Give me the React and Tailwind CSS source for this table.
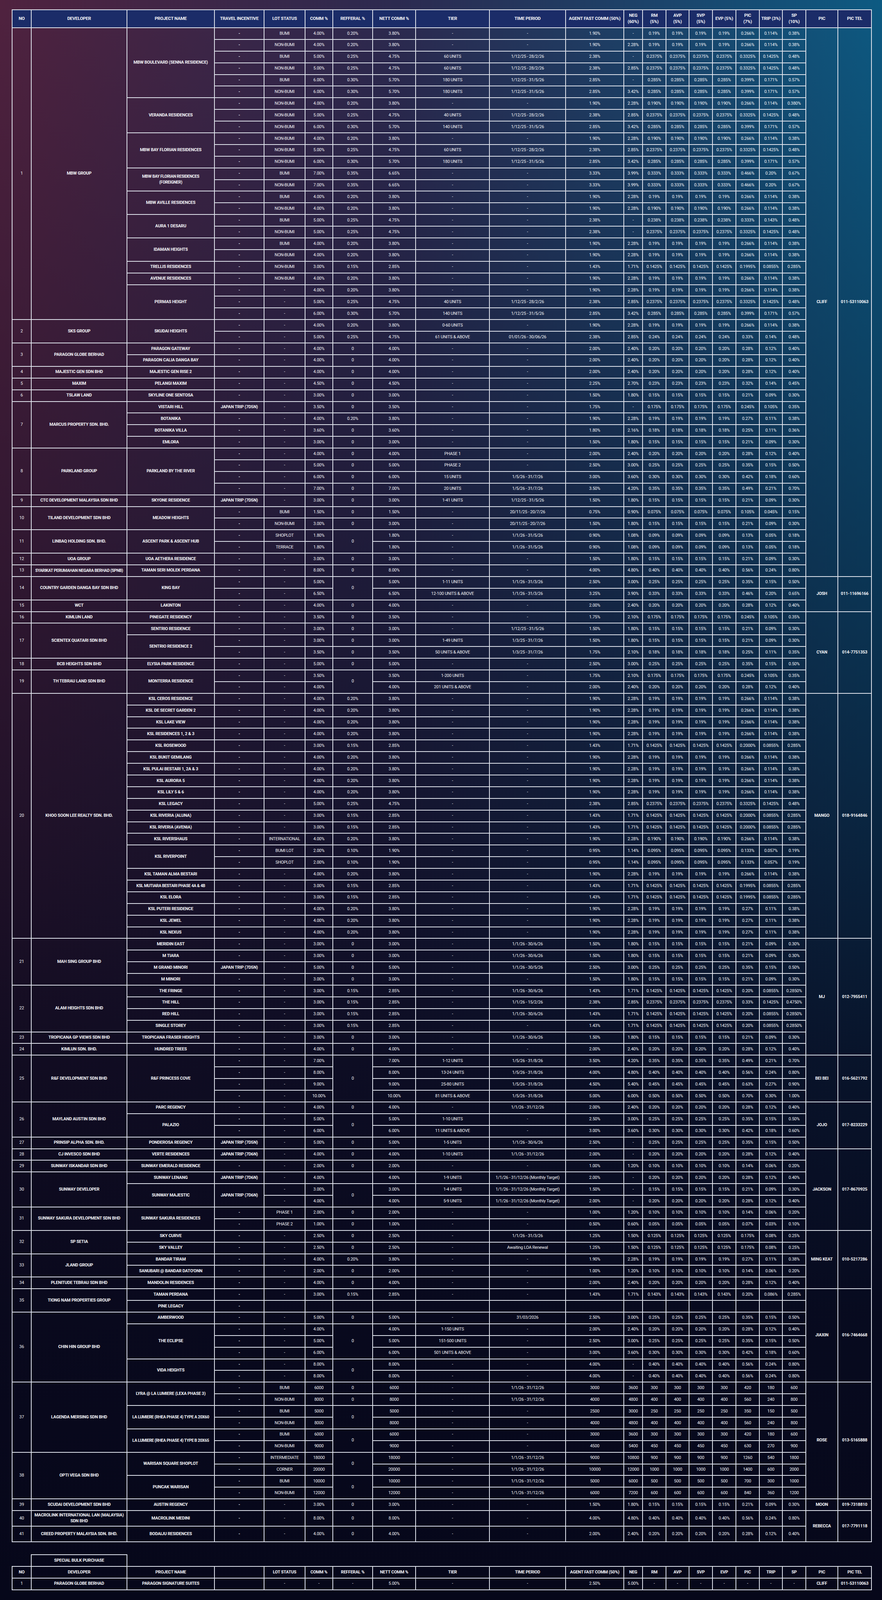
import React from 'react';

// column widths of the commission table, left to right
const COLS = [49, 245, 224, 127, 105, 71, 102, 110, 189, 195, 149, 48, 60, 59, 60, 60, 60, 59, 60, 82, 86];

const HEAD = [
  'NO', 'DEVELOPER', 'PROJECT NAME', 'TRAVEL INCENTIVE', 'LOT STATUS', 'COMM %', 'REFFERAL %', 'NETT COMM %',
  'TIER', 'TIME PERIOD', 'AGENT FAST COMM (50%)', 'NEG\n(60%)', 'RM\n(5%)', 'AVP\n(5%)', 'SVP\n(5%)', 'EVP (5%)',
  'PIC\n(7%)', 'TRIP (3%)', 'SP\n(10%)', 'PIC', 'PIC TEL',
];

// row: travel|lot|comm|ref|nett|tier|time|agent|neg|rm(=avp=svp=evp)|pic|trip|sp
// "x~2" spans rows, "^" is covered by the span above
const K19 = '-|-|4.00%|0.20%|3.80%|-|-|1.90%|2.28%|0.19%|0.266%|0.114%|0.38%';
const K14 = '-|-|3.00%|0.15%|2.85%|-|-|1.43%|1.71%|0.1425%|0.2000%|0.0855%|0.285%';
const K14b = '-|-|3.00%|0.15%|2.85%|-|-|1.43%|1.71%|0.1425%|0.1995%|0.0855%|0.285%';
const K19b = '-|-|4.00%|0.20%|3.80%|-|-|1.90%|2.28%|0.19%|0.27%|0.11%|0.38%';
const P20 = '-|-|4.00%|0|4.00%|-|-|2.00%|2.40%|0.20%|0.28%|0.12%|0.40%';
const P15 = '-|-|3.00%|0|3.00%|-|-|1.50%|1.80%|0.15%|0.21%|0.09%|0.30%';

const DATA = [
  ['1', 'MBW GROUP', [
    ['MBW BOULEVARD (SENNA RESIDENCE)', [
      '-|BUMI|4.00%|0.20%|3.80%|-|-|1.90%|-|0.19%|0.266%|0.114%|0.38%',
      '-|NON-BUMI|4.00%|0.20%|3.80%|-|-|1.90%|2.28%|0.19%|0.266%|0.114%|0.38%',
      '-|BUMI|5.00%|0.25%|4.75%|60 UNITS|1/12/25 - 28/2/26|2.38%|-|0.2375%|0.3325%|0.1425%|0.48%',
      '-|NON-BUMI|5.00%|0.25%|4.75%|60 UNITS|1/12/25 - 28/2/26|2.38%|2.85%|0.2375%|0.3325%|0.1425%|0.48%',
      '-|BUMI|6.00%|0.30%|5.70%|180 UNITS|1/12/25 - 31/5/26|2.85%|-|0.285%|0.399%|0.171%|0.57%',
      '-|NON-BUMI|6.00%|0.30%|5.70%|180 UNITS|1/12/25 - 31/5/26|2.85%|3.42%|0.285%|0.399%|0.171%|0.57%',
    ]],
    ['VERANDA RESIDENCES', [
      '-|NON-BUMI|4.00%|0.20%|3.80%|-|-|1.90%|2.28%|0.190%|0.266%|0.114%|0.380%',
      '-|NON-BUMI|5.00%|0.25%|4.75%|40 UNITS|1/12/25 - 28/2/26|2.38%|2.85%|0.2375%|0.3325%|0.1425%|0.48%',
      '-|NON-BUMI|6.00%|0.30%|5.70%|140 UNITS|1/12/25 - 31/5/26|2.85%|3.42%|0.285%|0.399%|0.171%|0.57%',
    ]],
    ['MBW BAY FLORIAN RESIDENCES', [
      '-|NON-BUMI|4.00%|0.20%|3.80%|-|-|1.90%|2.28%|0.190%|0.266%|0.114%|0.38%',
      '-|NON-BUMI|5.00%|0.25%|4.75%|60 UNITS|1/12/25 - 28/2/26|2.38%|2.85%|0.2375%|0.3325%|0.1425%|0.48%',
      '-|NON-BUMI|6.00%|0.30%|5.70%|180 UNITS|1/12/25 - 31/5/26|2.85%|3.42%|0.285%|0.399%|0.171%|0.57%',
    ]],
    ['MBW BAY FLORIAN RESIDENCES\n(FOREIGNER)', [
      '-|BUMI|7.00%|0.35%|6.65%|-|-|3.33%|3.99%|0.333%|0.466%|0.20%|0.67%',
      '-|NON-BUMI|7.00%|0.35%|6.65%|-|-|3.33%|3.99%|0.333%|0.466%|0.20%|0.67%',
    ]],
    ['MBW AVILLE RESIDENCES', [
      '-|BUMI|4.00%|0.20%|3.80%|-|-|1.90%|2.28%|0.19%|0.266%|0.114%|0.38%',
      '-|NON-BUMI|4.00%|0.20%|3.80%|-|-|1.90%|2.28%|0.190%|0.266%|0.114%|0.38%',
    ]],
    ['AURA 1 DESARU', [
      '-|BUMI|5.00%|0.25%|4.75%|-|-|2.38%|-|0.238%|0.333%|0.143%|0.48%',
      '-|NON-BUMI|5.00%|0.25%|4.75%|-|-|2.38%|-|0.2375%|0.3325%|0.1425%|0.48%',
    ]],
    ['IDAMAN HEIGHTS', [
      '-|BUMI|4.00%|0.20%|3.80%|-|-|1.90%|2.28%|0.19%|0.266%|0.114%|0.38%',
      '-|NON-BUMI|4.00%|0.20%|3.80%|-|-|1.90%|2.28%|0.19%|0.266%|0.114%|0.38%',
    ]],
    ['TRELLIS RESIDENCES', ['-|NON-BUMI|3.00%|0.15%|2.85%|-|-|1.43%|1.71%|0.1425%|0.1995%|0.0855%|0.285%']],
    ['AVENUE RESIDENCES', ['-|NON-BUMI|4.00%|0.20%|3.80%|-|-|1.90%|2.28%|0.19%|0.266%|0.114%|0.38%']],
    ['PERMAS HEIGHT', [
      K19,
      '-|-|5.00%|0.25%|4.75%|40 UNITS|1/12/25 - 28/2/26|2.38%|2.85%|0.2375%|0.3325%|0.1425%|0.48%',
      '-|-|6.00%|0.30%|5.70%|140 UNITS|1/12/25 - 31/5/26|2.85%|3.42%|0.285%|0.399%|0.171%|0.57%',
    ]],
  ]],
  ['2', 'SKS GROUP', [
    ['SKUDAI HEIGHTS', [
      '-|-|4.00%|0.20%|3.80%|0-60 UNITS|-|1.90%|2.28%|0.19%|0.266%|0.114%|0.38%',
      '-|-|5.00%|0.25%|4.75%|61 UNITS & ABOVE|01/01/26 - 30/06/26|2.38%|2.85%|0.24%|0.33%|0.14%|0.48%',
    ]],
  ]],
  ['3', 'PARAGON GLOBE BERHAD', [['PARAGON GATEWAY', [P20]], ['PARAGON CALIA DANGA BAY', [P20]]]],
  ['4', 'MAJESTIC GEN SDN BHD', [['MAJESTIC GEN RISE 2', [P20]]]],
  ['5', 'MAXIM', [['PELANGI MAXIM', ['-|-|4.50%|0|4.50%|-|-|2.25%|2.70%|0.23%|0.32%|0.14%|0.45%']]]],
  ['6', 'TSLAW LAND', [['SKYLINE ONE SENTOSA', [P15]]]],
  ['7', 'MARCUS PROPERTY SDN. BHD.', [
    ['VISTARI HILL', ['JAPAN TRIP (7D5N)|-|3.50%|0|3.50%|-|-|1.75%|-|0.175%|0.245%|0.105%|0.35%']],
    ['BOTANIKA', [K19b]],
    ['BOTANIKA VILLA', ['-|-|3.60%|0|3.60%|-|-|1.80%|2.16%|0.18%|0.25%|0.11%|0.36%']],
    ['EMLORA', [P15]],
  ]],
  ['8', 'PARKLAND GROUP', [
    ['PARKLAND BY THE RIVER', [
      '-|-|4.00%|0|4.00%|PHASE 1|-|2.00%|2.40%|0.20%|0.28%|0.12%|0.40%',
      '-|-|5.00%|0|5.00%|PHASE 2|-|2.50%|3.00%|0.25%|0.35%|0.15%|0.50%',
      '-|-|6.00%|0|6.00%|15 UNITS|1/5/26 - 31/7/26|3.00%|3.60%|0.30%|0.42%|0.18%|0.60%',
      '-|-|7.00%|0|7.00%|20 UNITS|1/5/26 - 31/7/26|3.50%|4.20%|0.35%|0.49%|0.21%|0.70%',
    ]],
  ]],
  ['9', 'CTC DEVELOPMENT MALAYSIA SDN BHD', [
    ['SKYONE RESIDENCE', ['JAPAN TRIP (7D5N)|-|3.00%|0|3.00%|1-41 UNITS|1/12/25 - 31/5/26|1.50%|1.80%|0.15%|0.21%|0.09%|0.30%']],
  ]],
  ['10', 'TILAND DEVELOPMENT SDN BHD', [
    ['MEADOW HEIGHTS', [
      '-|BUMI|1.50%|0|1.50%|-|20/11/25 - 20/7/26|0.75%|0.90%|0.075%|0.105%|0.045%|0.15%',
      '-|NON-BUMI|3.00%|0|3.00%|-|20/11/25 - 20/7/26|1.50%|1.80%|0.15%|0.21%|0.09%|0.30%',
    ]],
  ]],
  ['11', 'LINBAQ HOLDING SDN. BHD.', [
    ['ASCENT PARK & ASCENT HUB', [
      '-|SHOPLOT|1.80%|0~2|1.80%|-|1/1/26 - 31/5/26|0.90%|1.08%|0.09%|0.13%|0.05%|0.18%',
      '-|TERRACE|1.80%|^|1.80%|-|1/1/26 - 31/5/26|0.90%|1.08%|0.09%|0.13%|0.05%|0.18%',
    ]],
  ]],
  ['12', 'UOA GROUP', [['UOA AETHERA RESIDENCE', [P15]]]],
  ['13', 'SYARIKAT PERUMAHAN NEGARA BERHAD (SPNB)', [
    ['TAMAN SERI MOLEK PERDANA', ['-|-|8.00%|0|8.00%|-|-|4.00%|4.80%|0.40%|0.56%|0.24%|0.80%']],
  ]],
  ['14', 'COUNTRY GARDEN DANGA BAY SDN BHD', [
    ['KING BAY', [
      '-|-|5.00%|0~2|5.00%|1-11 UNITS|1/1/26 - 31/3/26|2.50%|3.00%|0.25%|0.35%|0.15%|0.50%',
      '-|-|6.50%|^|6.50%|12-100 UNITS & ABOVE|1/1/26 - 31/3/26|3.25%|3.90%|0.33%|0.46%|0.20%|0.65%',
    ]],
  ]],
  ['15', 'WCT', [['LAKINTON', [P20]]]],
  ['16', 'KIMLUN LAND', [['PINEGATE RESIDENCY', ['-|-|3.50%|0|3.50%|-|-|1.75%|2.10%|0.175%|0.245%|0.105%|0.35%']]]],
  ['17', 'SCIENTEX QUATARI SDN BHD', [
    ['SENTRIO RESIDENCE', ['-|-|3.00%|0|3.00%|-|1/12/25 - 31/5/26|1.50%|1.80%|0.15%|0.21%|0.09%|0.30%']],
    ['SENTRIO RESIDENCE 2', [
      '-|-|3.00%|0|3.00%|1-49 UNITS|1/3/25 - 31/7/26|1.50%|1.80%|0.15%|0.21%|0.09%|0.30%',
      '-|-|3.50%|0|3.50%|50 UNITS & ABOVE|1/3/25 - 31/7/26|1.75%|2.10%|0.18%|0.25%|0.11%|0.35%',
    ]],
  ]],
  ['18', 'BCB HEIGHTS SDN BHD', [['ELYSIA PARK RESIDENCE', ['-|-|5.00%|0|5.00%|-|-|2.50%|3.00%|0.25%|0.35%|0.15%|0.50%']]]],
  ['19', 'TH TEBRAU LAND SDN BHD', [
    ['MONTERRA RESIDENCE', [
      '-|-|3.50%|0~2|3.50%|1-200 UNITS|-|1.75%|2.10%|0.175%|0.245%|0.105%|0.35%',
      '-|-|4.00%|^|4.00%|201 UNITS & ABOVE|-|2.00%|2.40%|0.20%|0.28%|0.12%|0.40%',
    ]],
  ]],
  ['20', 'KHOO SOON LEE REALTY SDN. BHD.', [
    ['KSL CEROS RESIDENCE', [K19]],
    ['KSL DE SECRET GARDEN 2', [K19]],
    ['KSL LAKE VIEW', [K19]],
    ['KSL RESIDENCES 1, 2 & 3', [K19]],
    ['KSL ROSEWOOD', [K14]],
    ['KSL BUKIT GEMILANG', [K19]],
    ['KSL PULAI BESTARI 1, 2A & 3', [K19]],
    ['KSL AURORA 5', [K19]],
    ['KSL LILY 5 & 6', [K19]],
    ['KSL LEGACY', ['-|-|5.00%|0.25%|4.75%|-|-|2.38%|2.85%|0.2375%|0.3325%|0.1425%|0.48%']],
    ['KSL RIVERIA (ALUNA)', [K14]],
    ['KSL RIVERIA (AVENIA)', [K14]],
    ['KSL RIVERSHAUS', ['-|INTERNATIONAL|4.00%|0.20%|3.80%|-|-|1.90%|2.28%|0.190%|0.266%|0.114%|0.38%']],
    ['KSL RIVERPOINT', [
      '-|BUMI LOT|2.00%|0.10%|1.90%|-|-|0.95%|1.14%|0.095%|0.133%|0.057%|0.19%',
      '-|SHOPLOT|2.00%|0.10%|1.90%|-|-|0.95%|1.14%|0.095%|0.133%|0.057%|0.19%',
    ]],
    ['KSL TAMAN ALMA BESTARI', [K19]],
    ['KSL MUTIARA BESTARI PHASE 4A & 4B', [K14b]],
    ['KSL ELORA', [K14b]],
    ['KSL PUTERI RESIDENCE', [K19b]],
    ['KSL JEWEL', [K19b]],
    ['KSL NEXUS', [K19b]],
  ]],
  ['21', 'MAH SING GROUP BHD', [
    ['MERIDIN EAST', ['-|-|3.00%|0|3.00%|-|1/1/26 - 30/6/26|1.50%|1.80%|0.15%|0.21%|0.09%|0.30%']],
    ['M TIARA', ['-|-|3.00%|0|3.00%|-|1/1/26 - 30/6/26|1.50%|1.80%|0.15%|0.21%|0.09%|0.30%']],
    ['M GRAND MINORI', ['JAPAN TRIP (7D5N)|-|5.00%|0|5.00%|-|1/1/26 - 30/5/26|2.50%|3.00%|0.25%|0.35%|0.15%|0.50%']],
    ['M MINORI', [P15]],
  ]],
  ['22', 'ALAM HEIGHTS SDN BHD', [
    ['THE FRINGE', ['-|-|3.00%|0.15%|2.85%|-|1/1/26 - 30/6/26|1.43%|1.71%|0.1425%|0.20%|0.0855%|0.2850%']],
    ['THE HILL', ['-|-|3.00%|0.15%|2.85%|-|1/1/26 - 15/2/26|2.38%|2.85%|0.2375%|0.33%|0.1425%|0.4750%']],
    ['RED HILL', ['-|-|3.00%|0.15%|2.85%|-|1/1/26 - 30/6/26|1.43%|1.71%|0.1425%|0.20%|0.0855%|0.2850%']],
    ['SINGLE STOREY', ['-|-|3.00%|0.15%|2.85%|-|-|1.43%|1.71%|0.1425%|0.20%|0.0855%|0.2850%']],
  ]],
  ['23', 'TROPICANA GP VIEWS SDN BHD', [
    ['TROPICANA FRASER HEIGHTS', ['-|-|3.00%|0|3.00%|-|1/1/26 - 30/6/26|1.50%|1.80%|0.15%|0.21%|0.09%|0.30%']],
  ]],
  ['24', 'KIMLUN SDN. BHD.', [['HUNDRED TREES', [P20]]]],
  ['25', 'R&F DEVELOPMENT SDN BHD', [
    ['R&F PRINCESS COVE', [
      '-|-|7.00%|0~4|7.00%|1-12 UNITS|1/5/26 - 31/8/26|3.50%|4.20%|0.35%|0.49%|0.21%|0.70%',
      '-|-|8.00%|^|8.00%|13-24 UNITS|1/5/26 - 31/8/26|4.00%|4.80%|0.40%|0.56%|0.24%|0.80%',
      '-|-|9.00%|^|9.00%|25-80 UNITS|1/5/26 - 31/8/26|4.50%|5.40%|0.45%|0.63%|0.27%|0.90%',
      '-|-|10.00%|^|10.00%|81 UNITS & ABOVE|1/5/26 - 31/8/26|5.00%|6.00%|0.50%|0.70%|0.30%|1.00%',
    ]],
  ]],
  ['26', 'MAYLAND AUSTIN SDN BHD', [
    ['PARC REGENCY', ['-|-|4.00%|0|4.00%|-|1/1/26 - 31/12/26|2.00%|2.40%|0.20%|0.28%|0.12%|0.40%']],
    ['PALAZIO', [
      '-|-|5.00%|0~2|5.00%|1-10 UNITS|-|2.50%|3.00%|0.25%|0.35%|0.15%|0.50%',
      '-|-|6.00%|^|6.00%|11 UNITS & ABOVE|-|3.00%|3.60%|0.30%|0.42%|0.18%|0.60%',
    ]],
  ]],
  ['27', 'PRINSIP ALPHA SDN. BHD.', [
    ['PONDEROSA REGENCY', ['JAPAN TRIP (7D5N)|-|5.00%|0|5.00%|1-5 UNITS|1/1/26 - 30/6/26|2.50%|-|0.25%|0.35%|0.15%|0.50%']],
  ]],
  ['28', 'CJ INVESCO SDN BHD', [
    ['VERTE RESIDENCES', ['JAPAN TRIP (7D6N)|-|4.00%|0|4.00%|1-10 UNITS|1/1/26 - 31/12/26|2.00%|-|0.20%|0.28%|0.12%|0.40%']],
  ]],
  ['29', 'SUNWAY ISKANDAR SDN BHD', [
    ['SUNWAY EMERALD RESIDENCE', ['-|-|2.00%|0|2.00%|-|-|1.00%|1.20%|0.10%|0.14%|0.06%|0.20%']],
  ]],
  ['30', 'SUNWAY DEVELOPER', [
    ['SUNWAY LENANG', ['JAPAN TRIP (7D6N)|-|4.00%||4.00%|1-9 UNITS|1/1/26 - 31/12/26 (Monthly Target)|2.00%|-|0.20%|0.28%|0.12%|0.40%']],
    ['SUNWAY MAJESTIC', [
      'JAPAN TRIP (7D6N)~2|-|3.00%|0~2|3.00%|1-4 UNITS|1/1/26 - 31/12/26 (Monthly Target)|1.50%|-|0.15%|0.21%|0.09%|0.30%',
      '^|-|4.00%|^|4.00%|5-9 UNITS|1/1/26 - 31/12/26 (Monthly Target)|2.00%|-|0.20%|0.28%|0.12%|0.40%',
    ]],
  ]],
  ['31', 'SUNWAY SAKURA DEVELOPMENT SDN BHD', [
    ['SUNWAY SAKURA RESIDENCES', [
      '-|PHASE 1|2.00%|0|2.00%|-|-|1.00%|1.20%|0.10%|0.14%|0.06%|0.20%',
      '-|PHASE 2|1.00%|0|1.00%|-|-|0.50%|0.60%|0.05%|0.07%|0.03%|0.10%',
    ]],
  ]],
  ['32', 'SP SETIA', [
    ['SKY CURVE', ['-|-|2.50%|0|2.50%|-|1/1/26 - 31/3/26|1.25%|1.50%|0.125%|0.175%|0.08%|0.25%']],
    ['SKY VALLEY', ['-|-|2.50%|0|2.50%|-|Awaiting LOA Renewal|1.25%|1.50%|0.125%|0.175%|0.08%|0.25%']],
  ]],
  ['33', 'JLAND GROUP', [
    ['BANDAR TIRAM', [K19b]],
    ["SANUBARI @ BANDAR DATO'ONN", ['-|-|2.00%|0|2.00%|-|-|1.00%|1.20%|0.10%|0.14%|0.06%|0.20%']],
  ]],
  ['34', 'PLENITUDE TEBRAU SDN BHD', [['MANDOLIN RESIDENCES', [P20]]]],
  ['35', 'TIONG NAM PROPERTIES GROUP', [
    ['TAMAN PERDANA', ['-|-|3.00%|0.15%|2.85%|-|-|1.43%|1.71%|0.143%|0.20%|0.086%|0.285%']],
    ['PINE LEGACY', ['-||||||||||||']],
  ]],
  ['36', 'CHIN HIN GROUP BHD', [
    ['AMBERWOOD', ['-|-|5.00%|0|5.00%|-|31/03/2026|2.50%|3.00%|0.25%|0.35%|0.15%|0.50%']],
    ['THE ECLIPSE', [
      '-|-|4.00%|0~3|4.00%|1-150 UNITS|-|2.00%|2.40%|0.20%|0.28%|0.12%|0.40%',
      '-|-|5.00%|^|5.00%|151-500 UNITS|-|2.50%|3.00%|0.25%|0.35%|0.15%|0.50%',
      '-|-|6.00%|^|6.00%|501 UNITS & ABOVE|-|3.00%|3.60%|0.30%|0.42%|0.18%|0.60%',
    ]],
    ['VIDA HEIGHTS', [
      '-|-|8.00%|0~2|8.00%|-|-|4.00%|-|0.40%|0.56%|0.24%|0.80%',
      '-|-|8.00%|^|8.00%|-|-|4.00%|-|0.40%|0.56%|0.24%|0.80%',
    ]],
  ]],
  ['37', 'LAGENDA MERSING SDN BHD', [
    ['LYRA @ LA LUMIERE (LEXA PHASE 3)', [
      '-|BUMI|6000|0|6000|-|1/1/26 - 31/12/26|3000|3600|300|420|180|600',
      '-|NON-BUMI|8000|0|8000|-|1/1/26 - 31/12/26|4000|4800|400|560|240|800',
    ]],
    ['LA LUMIERE (RHEA PHASE 4) TYPE A 20X60', [
      '-|BUMI|5000|0~2|5000|-|-|2500|3000|250|350|150|500',
      '-|NON-BUMI|8000|^|8000|-|-|4000|4800|400|560|240|800',
    ]],
    ['LA LUMIERE (RHEA PHASE 4) TYPE B 20X65', [
      '-|BUMI|6000|0~2|6000|-|-|3000|3600|300|420|180|600',
      '-|NON-BUMI|9000|^|9000|-|-|4500|5400|450|630|270|900',
    ]],
  ]],
  ['38', 'OPTI VEGA SDN BHD', [
    ['WARISAN SQUARE SHOPLOT', [
      '-|INTERMEDIATE|18000|0~2|18000|-|1/1/26 - 31/12/26|9000|10800|900|1260|540|1800',
      '-|CORNER|20000|^|20000|-|1/1/26 - 31/12/26|10000|12000|1000|1400|600|2000',
    ]],
    ['PUNCAK WARISAN', [
      '-|BUMI|10000|0~2|10000|-|1/1/26 - 31/12/26|5000|6000|500|700|300|1000',
      '-|NON-BUMI|12000|^|12000|-|1/1/26 - 31/12/26|6000|7200|600|840|360|1200',
    ]],
  ]],
  ['39', 'SCUDAI DEVELOPMENT SDN BHD', [['AUSTIN REGENCY', [P15]]]],
  ['40', 'MACROLINK INTERNATIONAL LAN (MALAYSIA)\nSDN BHD', [
    ['MACROLINK MEDINI', ['-|-|8.00%|0|8.00%|-|-|4.00%|4.80%|0.40%|0.56%|0.24%|0.80%']],
  ], true],
  ['41', 'CREED PROPERTY MALAYSIA SDN. BHD.', [['BODAIJU RESIDENCES', [P20]]], true],
];

const PICS = [
  ['CLIFF', '011-53110063', 47],
  ['JOSH', '011-11696166', 3],
  ['CYAN', '014-7751353', 7],
  ['MANGO', '018-9164846', 21],
  ['MJ', '012-7955411', 10],
  ['BEI BEI', '016-5621792', 4],
  ['JOJO', '017-8233229', 4],
  ['JACKSON', '017-8670925', 7],
  ['MING KEAT', '010-5217286', 5],
  ['JIAXIN', '016-7464668', 8],
  ['ROSE', '013-5165888', 10],
  ['MOON', '019-7318810', 1],
  ['REBECCA', '017-7791118', 2],
];

const SPECIAL_HEAD = [
  'NO', 'DEVELOPER', 'PROJECT NAME', '', 'LOT STATUS', 'COMM %', 'REFFERAL %', 'NETT COMM %', 'TIER', 'TIME PERIOD',
  'AGENT FAST COMM (50%)', 'NEG', 'RM', 'AVP', 'SVP', 'EVP', 'PIC', 'TRIP', 'SP', 'PIC', 'PIC TEL',
];
const SPECIAL_ROW = [
  '1', 'PARAGON GLOBE BERHAD', 'PARAGON SIGNATURE SUITES', '', '-', '-', '-', '5.00%', '-', '-',
  '2.50%', '5.00%', '-', '-', '-', '-', '-', '-', '-', 'CLIFF', '011-53110063',
];

// flatten groups into table rows
const ROWS = [];
DATA.forEach(([no, dev, projects, tall]) => {
  const devSpan = projects.reduce((n, p) => n + p[1].length, 0);
  projects.forEach(([name, list], pi) => {
    list.forEach((line, li) => {
      ROWS.push({
        no, dev, name, tall,
        devSpan: pi === 0 && li === 0 ? devSpan : 0,
        projSpan: li === 0 ? list.length : 0,
        cells: line.split('|'),
      });
    });
  });
});
let start = 0;
PICS.forEach(([pic, tel, span]) => {
  ROWS[start].pic = { pic, tel, span };
  start += span;
});

const td = 'border-2 border-[#dfe3ec] text-center align-middle px-0.5 leading-[1.35] whitespace-pre';

const Cell = ({ raw, bold }) => {
  if (raw === '^') return null;
  const [v, span] = raw.split('~');
  return (
    <td rowSpan={span ? Number(span) : undefined} className={`${td} ${bold ? 'font-bold' : 'font-normal'}`}>
      {v}
    </td>
  );
};

const ColGroup = () => (
  <colgroup>
    {COLS.map((w, i) => (
      <col key={i} style={{ width: w }} />
    ))}
  </colgroup>
);

export default function App() {
  return (
    <div className="min-h-screen w-full bg-[image:linear-gradient(to_bottom,rgba(7,8,28,0)_0%,rgba(7,8,28,0.4)_33%,rgba(7,8,28,0.62)_50%,rgba(7,8,28,0.85)_66%,rgba(7,8,28,0.97)_82%,#06071a_100%),linear-gradient(to_right,#50223f,#2c2a50_45%,#0d5a82)] pt-[24px] pl-[30px] pb-[24px] text-[11px] tracking-[-0.25px] text-[#f4f5f8] font-['Roboto',sans-serif]">
      <table className="w-[2200px] table-fixed border-collapse">
        <ColGroup />
        <thead>
          <tr className="h-[46px]">
            {HEAD.map((h, i) => (
              <th key={i} className={`${td} bg-[#1b2c68] font-bold text-[11.5px]`}>
                {h}
              </th>
            ))}
          </tr>
        </thead>
        <tbody>
          {ROWS.map((r, i) => {
            const c = r.cells;
            return (
              <tr key={i} className={r.tall ? 'h-[40px]' : 'h-[29.9px]'}>
                {r.devSpan > 0 && (
                  <>
                    <td rowSpan={r.devSpan} className={`${td} font-normal`}>{r.no}</td>
                    <td rowSpan={r.devSpan} className={`${td} font-bold ${r.dev.length > 36 && !r.dev.includes('\n') ? 'text-[10.5px] tracking-[-0.4px]' : ''}`}>{r.dev}</td>
                  </>
                )}
                {r.projSpan > 0 && (
                  <td rowSpan={r.projSpan} className={`${td} font-bold ${r.name.length > 32 ? 'text-[10.5px] tracking-[-0.4px]' : ''}`}>{r.name}</td>
                )}
                <Cell raw={c[0]} bold />
                <Cell raw={c[1]} />
                <Cell raw={c[2]} />
                <Cell raw={c[3]} />
                <Cell raw={c[4]} />
                <Cell raw={c[5]} />
                <Cell raw={c[6]} />
                <Cell raw={c[7]} />
                <Cell raw={c[8]} />
                <Cell raw={c[9]} />
                <Cell raw={c[9]} />
                <Cell raw={c[9]} />
                <Cell raw={c[9]} />
                <Cell raw={c[10]} />
                <Cell raw={c[11]} />
                <Cell raw={c[12]} />
                {r.pic && (
                  <>
                    <td rowSpan={r.pic.span} className={`${td} font-bold`}>{r.pic.pic}</td>
                    <td rowSpan={r.pic.span} className={`${td} font-bold`}>{r.pic.tel}</td>
                  </>
                )}
              </tr>
            );
          })}
        </tbody>
      </table>

      <table className="mt-[31px] w-[2200px] table-fixed border-collapse">
        <ColGroup />
        <tbody>
          <tr className="h-[29.9px]">
            <td className="border-0" />
            <td className={`${td} font-bold`}>SPECIAL BULK PURCHASE</td>
            <td colSpan={19} className="border-0" />
          </tr>
          <tr className="h-[29.9px]">
            {SPECIAL_HEAD.map((h, i) => (
              <td key={i} className={`${td} font-bold`}>{h}</td>
            ))}
          </tr>
          <tr className="h-[29.9px]">
            {SPECIAL_ROW.map((v, i) => (
              <td key={i} className={`${td} ${[1, 2, 19, 20].includes(i) ? 'font-bold' : 'font-normal'}`}>{v}</td>
            ))}
          </tr>
        </tbody>
      </table>
    </div>
  );
}
